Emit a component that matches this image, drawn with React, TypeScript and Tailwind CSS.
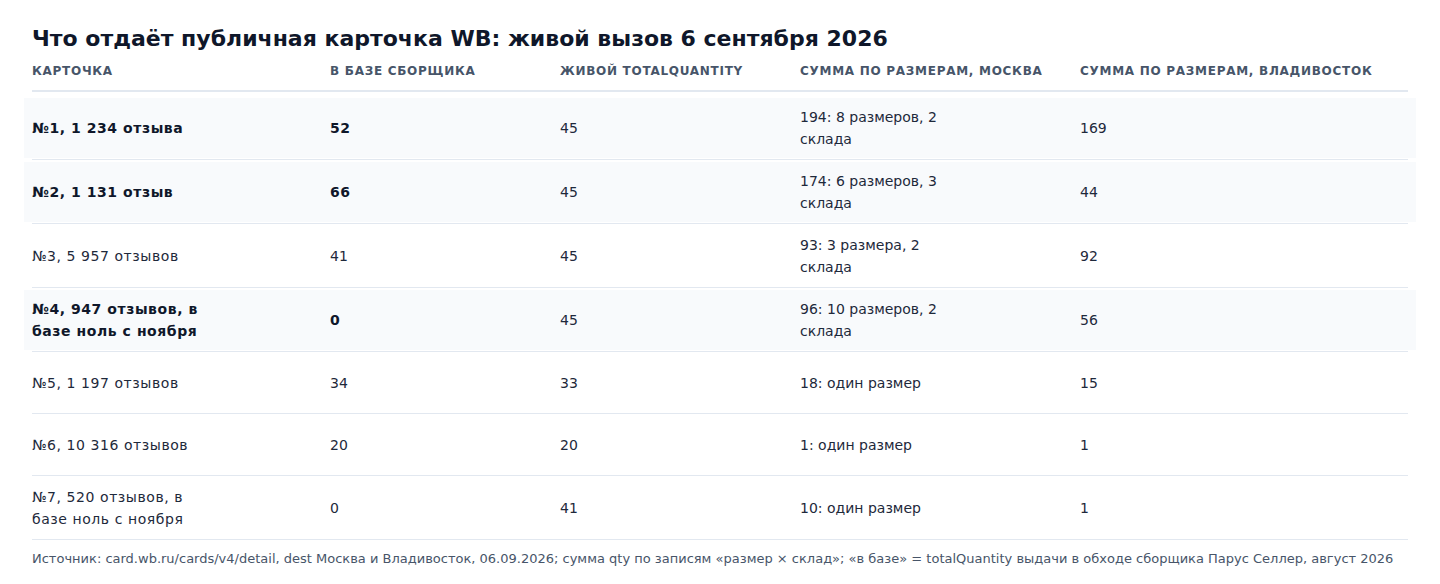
const rows = [
  { card: '№1, 1 234 отзыва', base: '52', live: '45', msk: '194: 8 размеров, 2 склада', vl: '169', hl: true },
  { card: '№2, 1 131 отзыв', base: '66', live: '45', msk: '174: 6 размеров, 3 склада', vl: '44', hl: true },
  { card: '№3, 5 957 отзывов', base: '41', live: '45', msk: '93: 3 размера, 2 склада', vl: '92', hl: false },
  { card: '№4, 947 отзывов, в базе ноль с ноября', base: '0', live: '45', msk: '96: 10 размеров, 2 склада', vl: '56', hl: true },
  { card: '№5, 1 197 отзывов', base: '34', live: '33', msk: '18: один размер', vl: '15', hl: false },
  { card: '№6, 10 316 отзывов', base: '20', live: '20', msk: '1: один размер', vl: '1', hl: false },
  { card: '№7, 520 отзывов, в базе ноль с ноября', base: '0', live: '41', msk: '10: один размер', vl: '1', hl: false },
]

const grid = 'grid grid-cols-[298px_230px_240px_280px_1fr]'

export default function App() {
  return (
    <div className="min-h-screen bg-white px-8 pt-[25px] text-[#1e293b]" style={{ fontFamily: '"DejaVu Sans", sans-serif' }}>
      <h1 className="text-[22px] font-bold leading-7 text-[#0f172a]">
        Что отдаёт публичная карточка WB: живой вызов 6 сентября 2026
      </h1>

      {/* Header */}
      <div className={`${grid} mt-[9px] border-b-2 border-[#e2e8f0] pt-[1px] pb-[11px] text-[12px] font-bold uppercase leading-4 tracking-[0.06em] text-[#475569]`}>
        <div>Карточка</div>
        <div>В базе сборщика</div>
        <div>Живой totalQuantity</div>
        <div>Сумма по размерам, Москва</div>
        <div>Сумма по размерам, Владивосток</div>
      </div>

      {/* Body */}
      <div className="pt-1">
        {rows.map((r, i) => (
          <div key={i} className="border-b border-[#e2e8f0] pt-[2px] pb-[1px]">
            <div
              className={`${grid} -mx-2 min-h-[58px] items-center px-2 py-2 text-[14px] leading-[22px] ${
                r.hl ? 'bg-[#f8fafc]' : ''
              }`}
            >
              <div className={`pr-[120px] tracking-[0.04em] ${r.hl ? 'font-bold text-[#0f172a]' : ''}`}>{r.card}</div>
              <div className={r.hl ? 'font-bold tracking-[0.04em] text-[#0f172a]' : ''}>{r.base}</div>
              <div>{r.live}</div>
              <div className="pr-[136px]">{r.msk}</div>
              <div>{r.vl}</div>
            </div>
          </div>
        ))}
      </div>

      <p className="mt-[11px] text-[13px] leading-4 text-[#475569]">
        Источник: card.wb.ru/cards/v4/detail, dest Москва и Владивосток, 06.09.2026; сумма qty по записям «размер × склад»; «в базе» = totalQuantity выдачи в обходе сборщика Парус Селлер, август 2026
      </p>
    </div>
  )
}
